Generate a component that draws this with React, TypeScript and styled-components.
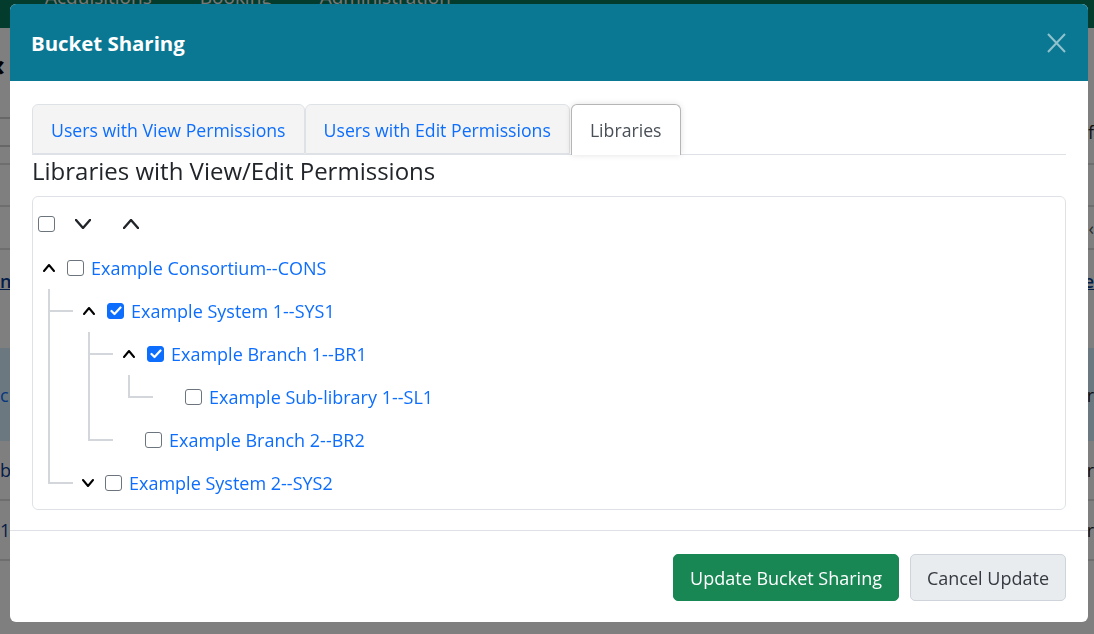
import React from "react";
import styled, { createGlobalStyle } from "styled-components";

const GlobalStyle = createGlobalStyle`
  html, body { margin: 0; padding: 0; }
  body {
    width: 1094px;
    height: 634px;
    overflow: hidden;
    font-family: "Open Sans", "Noto Sans", "Liberation Sans", sans-serif;
    background: #ffffff;
  }
  * { box-sizing: border-box; }
`;

/* ---------- background page ---------- */
const Page = styled.div`
  width: 1094px;
  height: 634px;
  background: #ffffff;
  display: flex;
  flex-direction: column;
`;

const NavBar = styled.div`
  height: 28px;
  background: #06765a;
  display: flex;
  align-items: flex-end;
  gap: 48px;
  padding-left: 45px;
  overflow: hidden;
`;

const NavItem = styled.span`
  color: #f0f0f0;
  font-size: 19px;
  line-height: 19px;
  margin-bottom: 21px;
`;

const BgRow = styled.div<{ $h: number; $bg?: string; $line?: boolean }>`
  height: ${(p) => p.$h}px;
  background: ${(p) => p.$bg || "transparent"};
  border-bottom: ${(p) => (p.$line ? "2px solid #dcdcdc" : "none")};
  display: flex;
  align-items: center;
  justify-content: space-between;
  font-size: 18px;
  color: #222;
`;

const BgText = styled.span<{ $color?: string; $u?: boolean }>`
  color: ${(p) => p.$color || "#222"};
  text-decoration: ${(p) => (p.$u ? "underline" : "none")};
  font-weight: ${(p) => (p.$u ? 600 : 400)};
`;

const BackGlyph = styled.span`
  font-size: 30px;
  font-weight: 700;
  color: #000;
  margin-left: -6px;
`;

const BgInput = styled.span`
  width: 16px;
  height: 30px;
  border: 2px solid #cfcfcf;
  border-left: none;
  margin-left: -4px;
`;

/* ---------- modal ---------- */
const Backdrop = styled.div`
  position: fixed;
  inset: 0;
  background: rgba(0, 0, 0, 0.5);
`;

const ModalLayer = styled.div`
  position: fixed;
  inset: 0;
  padding: 4px 6px 0 10px;
  display: flex;
  align-items: flex-start;
`;

const Dialog = styled.div`
  width: 1078px;
  height: 618px;
  background: #ffffff;
  border-radius: 6px;
  overflow: hidden;
  display: flex;
  flex-direction: column;
`;

const Header = styled.div`
  height: 77px;
  flex: none;
  background: #0b7893;
  display: flex;
  align-items: center;
  justify-content: space-between;
  padding: 0 22px;
`;

const Title = styled.h2`
  margin: 0;
  color: #ffffff;
  font-size: 20.4px;
  font-weight: 700;
  margin-left: -1px;
`;

const CloseButton = styled.button`
  border: none;
  background: transparent;
  padding: 0;
  width: 19px;
  height: 20px;
  display: flex;
  cursor: pointer;
`;

const Body = styled.div`
  flex: 1;
  padding: 23px 22px 20px;
  display: flex;
  flex-direction: column;
`;

const TabList = styled.div`
  display: flex;
  height: 51px;
  border-bottom: 1px solid #dee2e6;
`;

const Tab = styled.button<{ $active?: boolean }>`
  font-family: inherit;
  font-size: 17.7px;
  height: ${(p) => (p.$active ? "51px" : "50px")};
  padding: ${(p) => (p.$active ? "0 18px 1px" : "1px 18px 0")};
  border: 1px solid ${(p) => (p.$active ? "#b5b5b5" : "#dee2e6")};
  border-bottom: ${(p) => (p.$active ? "none" : "1px solid #dee2e6")};
  border-radius: 6px 6px 0 0;
  background: ${(p) => (p.$active ? "#ffffff" : "#f4f4f4")};
  color: ${(p) => (p.$active ? "#495057" : "#0d6efd")};
  box-shadow: ${(p) => (p.$active ? "0 0 6px rgba(0,0,0,0.12)" : "none")};
  margin-left: ${(p) => (p.$active ? "1px" : "0")};
  cursor: pointer;
  white-space: nowrap;
`;

const Heading = styled.h4`
  margin: 1px 0 11px;
  font-size: 24px;
  line-height: 29px;
  font-weight: 500;
  color: #212529;
`;

const TreeBox = styled.div`
  height: 314px;
  border: 1px solid #dee2e6;
  border-radius: 6px;
  padding: 16px 6px 4px 5px;
`;

const TreeToolbar = styled.div`
  height: 22px;
  margin-bottom: 11px;
  display: flex;
  align-items: center;
`;

const IconButton = styled.button<{ $ml: number }>`
  border: none;
  background: transparent;
  padding: 0;
  width: 28px;
  height: 22px;
  margin-left: ${(p) => p.$ml}px;
  display: flex;
  align-items: center;
  justify-content: center;
  cursor: pointer;
`;

const Check = styled.span<{ $checked?: boolean }>`
  width: 17px;
  height: 16px;
  flex: none;
  border-radius: 3px;
  border: 1px solid ${(p) => (p.$checked ? "#0d6efd" : "#6c757d")};
  background: ${(p) => (p.$checked ? "#0d6efd" : "#ffffff")};
  display: flex;
  align-items: center;
  justify-content: center;
`;

const TreeList = styled.ul<{ $nested?: boolean }>`
  list-style: none;
  margin: 0;
  padding: 0 0 0 ${(p) => (p.$nested ? 40 : 0)}px;
`;

const TreeItem = styled.li<{ $child?: boolean }>`
  position: relative;
  ${(p) =>
    p.$child
      ? `
  &::before {
    content: "";
    position: absolute;
    left: -30px;
    top: 0;
    width: 23px;
    height: 21px;
    border-left: 2px solid #d3d6db;
    border-bottom: 2px solid #d3d6db;
  }
  &:not(:last-child)::after {
    content: "";
    position: absolute;
    left: -30px;
    top: 0;
    bottom: 0;
    border-left: 2px solid #d3d6db;
  }`
      : ""}
`;

const Row = styled.div`
  height: 43px;
  display: flex;
  align-items: center;
`;

const Toggle = styled.span<{ $w: number }>`
  width: ${(p) => p.$w}px;
  flex: none;
  display: flex;
  align-items: center;
  justify-content: center;
  margin-right: 7px;
`;

const Label = styled.a`
  margin-left: 7px;
  font-size: 18px;
  color: #0d6efd;
  text-decoration: none;
  white-space: nowrap;
`;

const Footer = styled.div`
  height: 92px;
  flex: none;
  border-top: 1px solid #dee2e6;
  display: flex;
  align-items: center;
  justify-content: flex-end;
  gap: 11px;
  padding: 2px 22px 0;
`;

const Button = styled.button<{ $primary?: boolean }>`
  height: 47px;
  padding: 0 16px;
  font-family: inherit;
  font-size: 18px;
  border-radius: 5px;
  border: 1px solid ${(p) => (p.$primary ? "#198754" : "#ced4da")};
  background: ${(p) => (p.$primary ? "#198754" : "#e9ecef")};
  color: ${(p) => (p.$primary ? "#ffffff" : "#343a40")};
  cursor: pointer;
`;

/* ---------- icons ---------- */
const Chevron = ({ up, size = "sm" }: { up?: boolean; size?: "sm" | "lg" }) => {
  const w = size === "lg" ? 14 : 10;
  const h = size === "lg" ? 8 : 6;
  const sw = size === "lg" ? 2.4 : 2;
  return (
    <svg width={w + 2} height={h + 2} viewBox={`-1 -1 ${w + 2} ${h + 2}`}>
      <polyline
        points={up ? `0,${h} ${w / 2},0 ${w},${h}` : `0,0 ${w / 2},${h} ${w},0`}
        fill="none"
        stroke={size === "lg" ? "#212529" : "#000"}
        strokeWidth={sw}
        strokeLinecap="round"
        strokeLinejoin="round"
      />
    </svg>
  );
};

const Tick = () => (
  <svg width="12" height="10" viewBox="0 0 12 10">
    <polyline points="1.5,5 4.5,8 10.5,1.5" fill="none" stroke="#fff" strokeWidth="2.2" strokeLinecap="round" strokeLinejoin="round" />
  </svg>
);

type Node = {
  label: string;
  checked?: boolean;
  expanded?: boolean;
  hasChildren?: boolean;
  children?: Node[];
};

const tree: Node[] = [
  {
    label: "Example Consortium--CONS",
    expanded: true,
    hasChildren: true,
    children: [
      {
        label: "Example System 1--SYS1",
        checked: true,
        expanded: true,
        hasChildren: true,
        children: [
          {
            label: "Example Branch 1--BR1",
            checked: true,
            expanded: true,
            hasChildren: true,
            children: [{ label: "Example Sub-library 1--SL1" }],
          },
          { label: "Example Branch 2--BR2" },
        ],
      },
      { label: "Example System 2--SYS2", hasChildren: true },
    ],
  },
];

const TreeNodes = ({ nodes, nested }: { nodes: Node[]; nested?: boolean }) => (
  <TreeList $nested={nested}>
    {nodes.map((n) => (
      <TreeItem key={n.label} $child={nested}>
        <Row>
          <Toggle $w={n.expanded ? 22 : 20}>
            {n.hasChildren ? <Chevron up={n.expanded} /> : null}
          </Toggle>
          <Check $checked={n.checked}>{n.checked ? <Tick /> : null}</Check>
          <Label href="#">{n.label}</Label>
        </Row>
        {n.expanded && n.children ? <TreeNodes nodes={n.children} nested /> : null}
      </TreeItem>
    ))}
  </TreeList>
);

export default function App() {
  return (
    <>
      <GlobalStyle />
      <Page>
        <NavBar>
          <NavItem>Acquisitions</NavItem>
          <NavItem>Booking</NavItem>
          <NavItem>Administration</NavItem>
        </NavBar>
        <BgRow $h={72}>
          <BackGlyph>‹</BackGlyph>
        </BgRow>
        <BgRow $h={65} $line>
          <BgInput />
          <BgText>f</BgText>
        </BgRow>
        <BgRow $h={42} $line />
        <BgRow $h={43} $line>
          <span />
          <BgText $color="#555">‹</BgText>
        </BgRow>
        <BgRow $h={62}>
          <BgText $color="#0a3d91" $u>
            n
          </BgText>
          <BgText $color="#0a3d91" $u>
            e
          </BgText>
        </BgRow>
        <BgRow $h={36} />
        <BgRow $h={93} $bg="#d6f0ff">
          <BgText $color="#0d6efd">c</BgText>
          <BgText>r</BgText>
        </BgRow>
        <BgRow $h={60} $line>
          <BgText $color="#0a3d91">b</BgText>
          <BgText>r</BgText>
        </BgRow>
        <BgRow $h={60} $line>
          <BgText $color="#0a3d91">1</BgText>
          <BgText>r</BgText>
        </BgRow>
      </Page>
      <Backdrop />
      <ModalLayer>
        <Dialog role="dialog">
          <Header>
            <Title>Bucket Sharing</Title>
            <CloseButton aria-label="Close">
              <svg width="19" height="20" viewBox="0 0 19 20">
                <path d="M1 1 L18 19 M18 1 L1 19" stroke="rgba(255,255,255,0.55)" strokeWidth="2" />
              </svg>
            </CloseButton>
          </Header>
          <Body>
            <TabList>
              <Tab>Users with View Permissions</Tab>
              <Tab>Users with Edit Permissions</Tab>
              <Tab $active>Libraries</Tab>
            </TabList>
            <Heading>Libraries with View/Edit Permissions</Heading>
            <TreeBox>
              <TreeToolbar>
                <Check />
                <IconButton $ml={14} aria-label="Expand all">
                  <Chevron size="lg" />
                </IconButton>
                <IconButton $ml={20} aria-label="Collapse all">
                  <Chevron size="lg" up />
                </IconButton>
              </TreeToolbar>
              <TreeNodes nodes={tree} />
            </TreeBox>
          </Body>
          <Footer>
            <Button $primary>Update Bucket Sharing</Button>
            <Button>Cancel Update</Button>
          </Footer>
        </Dialog>
      </ModalLayer>
    </>
  );
}
